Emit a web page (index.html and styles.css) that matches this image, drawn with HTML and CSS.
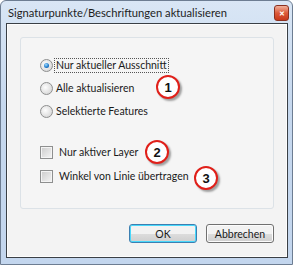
FILE: index.html
```html
<!DOCTYPE html>
<html lang="de">
<head>
  <meta charset="UTF-8" />
  <title>Signaturpunkte/Beschriftungen aktualisieren</title>
  <link rel="stylesheet" href="styles.css">
</head>
<body>
  <div class="window">
    <!-- Title bar -->
    <div class="titlebar">
      <span class="title">Signaturpunkte/Beschriftungen aktualisieren</span>
      <span class="close">&#x2715;</span>
    </div>

    <!-- Client area -->
    <div class="client">
      <div class="group">
        <div class="options">
          <label class="row"><span class="radio checked"></span><span class="text focus">Nur aktueller Ausschnitt</span></label>
          <label class="row"><span class="radio"></span><span class="text">Alle aktualisieren</span></label>
          <label class="row"><span class="radio"></span><span class="text">Selektierte Features</span></label>
        </div>
        <div class="options checks">
          <label class="row"><span class="check"></span><span class="text">Nur aktiver Layer</span></label>
          <label class="row"><span class="check"></span><span class="text">Winkel von Linie übertragen</span></label>
        </div>
      </div>

      <div class="buttons">
        <button class="btn default">OK</button>
        <button class="btn">Abbrechen</button>
      </div>

      <!-- callout markers -->
      <span class="marker m1">1</span>
      <span class="marker m2">2</span>
      <span class="marker m3">3</span>
    </div>
  </div>
</body>
</html>
```

FILE: styles.css
```css
body {
  margin: 0;
  background: #fff;
  font-family: 'Lato', 'Noto Sans', sans-serif;
}
.window {
  width: 293px;
  height: 265px;
  box-sizing: border-box;
  border: 1px solid #6d7d92;
  border-radius: 6px 6px 0 0;
  background: linear-gradient(#d9e6f5, #c6d8ee 40%, #c3d6ee);
  display: flex;
  flex-direction: column;
  overflow: hidden;
}
.titlebar {
  height: 22px;
  display: flex;
  align-items: center;
  justify-content: space-between;
  padding: 0 3px 0 7px;
}
.title {
  font-size: 11.2px;
  color: #1e1e1e;
}
.close {
  width: 13px;
  height: 14px;
  margin-top: 2px;
  border: 1px solid #8a3020;
  border-radius: 3px;
  background: linear-gradient(#f0b09a, #dc5a3a 50%, #c8381a);
  color: #fff;
  font-size: 7px;
  font-weight: bold;
  display: flex;
  align-items: center;
  justify-content: center;
}
.client {
  position: relative;
  flex: 1;
  margin: 0 4px 6px 5px;
  border: 1px solid #3a3f45;
  box-shadow: inset 0 0 0 1px #fdfdfd;
  background: #f3f3f3;
  padding: 13px 13px 0 13px;
  display: flex;
  flex-direction: column;
}
.group {
  height: 172px;
  box-sizing: border-box;
  border: 1px solid #dce2e7;
  border-radius: 3px;
  background: #f5f5f5;
  padding: 21px 0 0 19px;
}
.options {
  display: flex;
  flex-direction: column;
  gap: 10px;
}
.checks {
  margin-top: 28px;
  gap: 11px;
}
.row {
  display: flex;
  align-items: center;
  gap: 1px;
  height: 13px;
  font-size: 10.5px;
  color: #1a1a1a;
}
.text {
  padding: 0 1px;
  border: 1px dotted transparent;
  line-height: 13px;
}
.text.focus {
  border-color: #555;
}
.radio {
  width: 11px;
  height: 11px;
  border: 1px solid #8e8f8f;
  border-radius: 50%;
  background: radial-gradient(circle at 40% 40%, #fdfdfd, #dcdcdc 70%, #c8c8c8);
  position: relative;
}
.radio.checked::after {
  content: '';
  position: absolute;
  left: 3px;
  top: 3px;
  width: 5px;
  height: 5px;
  border-radius: 50%;
  background: radial-gradient(circle at 40% 35%, #9fdcff, #1b76c8 60%, #0c4a8d);
}
.check {
  width: 11px;
  height: 11px;
  border: 1px solid #8e8f8f;
  background: linear-gradient(135deg, #cbcbcb, #f5f5f5);
  box-shadow: inset 0 0 0 1px #f4f4f4;
  margin-right: 3px;
}
.buttons {
  display: flex;
  justify-content: flex-end;
  gap: 9px;
  margin-top: 15px;
}
.btn {
  height: 19px;
  width: 68px;
  padding: 0;
  font-family: inherit;
  font-size: 10.5px;
  color: #1a1a1a;
  border: 1px solid #707070;
  border-radius: 3px;
  background: linear-gradient(#f2f2f2 50%, #dddddd 50%, #cfcfcf);
  box-shadow: inset 0 0 0 1px #fcfcfc;
}
.btn.default {
  border-color: #3c7fb1;
  box-shadow: inset 0 0 0 1px #48d8fb;
}
.marker {
  position: absolute;
  width: 20px;
  height: 20px;
  border: 2px solid #e0201a;
  border-radius: 50%;
  background: #fff;
  box-shadow: 2px 2px 2px rgba(0, 0, 0, 0.35);
  font-family: 'Liberation Sans', Arial, sans-serif;
  font-size: 13px;
  font-weight: bold;
  color: #111;
  display: flex;
  align-items: center;
  justify-content: center;
}
.m1 { left: 149px; top: 51px; }
.m2 { left: 138px; top: 116px; }
.m3 { left: 187px; top: 142px; }
```
